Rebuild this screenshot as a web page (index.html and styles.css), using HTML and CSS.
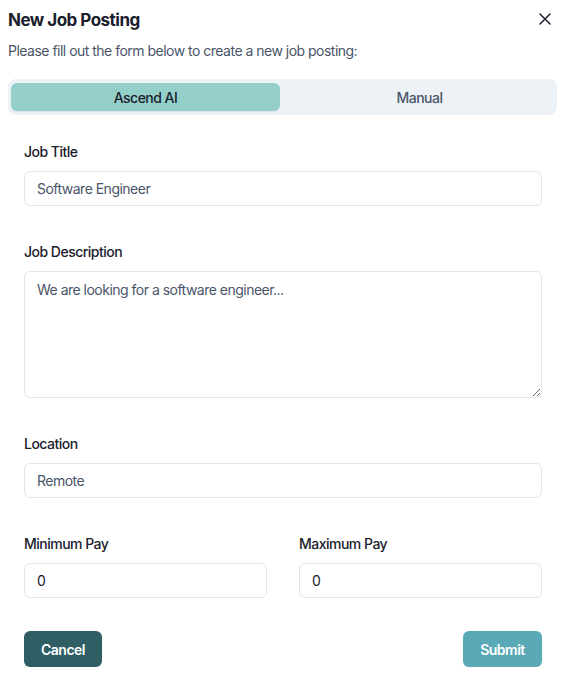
FILE: index.html
```html
<!DOCTYPE html>
<html>
<head>
<meta charset="utf-8">
<link rel="stylesheet" href="styles.css">
</head>
<body>
<div class="modal">
  <div class="header">
    <h1 class="title">New Job Posting</h1>
    <button class="close" aria-label="Close">
      <svg width="12" height="12" viewBox="0 0 12 12"><path d="M1 1L11 11M11 1L1 11" stroke="#1a202c" stroke-width="1.5" stroke-linecap="round"/></svg>
    </button>
  </div>
  <p class="subtitle">Please fill out the form below to create a new job posting:</p>
  <div class="tabs">
    <div class="tab active">Ascend AI</div>
    <div class="tab">Manual</div>
  </div>
  <form class="form">
    <div class="field">
      <label class="label">Job Title</label>
      <input class="input muted" value="Software Engineer">
    </div>
    <div class="field">
      <label class="label">Job Description</label>
      <textarea class="textarea muted">We are looking for a software engineer...</textarea>
    </div>
    <div class="field">
      <label class="label">Location</label>
      <input class="input muted" value="Remote">
    </div>
    <div class="field row">
      <div class="col">
        <label class="label">Minimum Pay</label>
        <input class="input" value="0">
      </div>
      <div class="col">
        <label class="label">Maximum Pay</label>
        <input class="input" value="0">
      </div>
    </div>
    <div class="actions">
      <button type="button" class="btn cancel">Cancel</button>
      <button type="button" class="btn submit">Submit</button>
    </div>
  </form>
</div>
</body>
</html>
```
FILE: styles.css
```css
* { box-sizing: border-box; }
body {
  margin: 0;
  background: #fff;
  font-family: Inter, "Noto Sans", sans-serif;
  color: #1a202c;
  letter-spacing: -0.032em;
}
.modal {
  padding: 6px 10px 0 8px;
}
.header {
  display: flex;
  justify-content: space-between;
  align-items: center;
  height: 28px;
}
.title {
  margin: 0;
  font-size: 17px;
  font-weight: 700;
  line-height: 28px;
}
.close {
  border: 0;
  background: none;
  padding: 0;
  width: 20px;
  height: 20px;
  display: flex;
  align-items: center;
  justify-content: center;
  margin-right: 2px;
  margin-top: -2px;
}
.subtitle {
  margin: 7px 0 0;
  font-size: 14px;
  line-height: 20px;
  color: #4a5568;
}
.tabs {
  margin-top: 18px;
  background: #edf2f7;
  border-radius: 8px;
  height: 36px;
  padding: 4px 3px 4px;
  display: flex;
}
.tab {
  flex: 1;
  display: flex;
  align-items: center;
  justify-content: center;
  font-size: 14px;
  font-weight: 500;
  color: #4a5568;
  border-radius: 6px;
}
.tab.active {
  margin-right: 5px;
  background: #94d0c9;
  color: #1a202c;
  box-shadow: 0 1px 2px rgba(0,0,0,0.06);
}
.form {
  padding: 27px 15px 0 16px;
}
.field + .field { margin-top: 36px; }
.label {
  display: block;
  font-size: 14px;
  font-weight: 500;
  line-height: 20px;
  margin-bottom: 9px;
}
.input, .textarea {
  display: block;
  width: 100%;
  border: 1px solid #e2e2f0;
  border-radius: 6px;
  font-family: inherit;
  letter-spacing: inherit;
  font-size: 14px;
  color: #1a202c;
  padding: 0 12px;
  background: #fff;
}
.input { height: 35px; }
.textarea {
  height: 127px;
  padding: 8px 12px;
  line-height: 20px;
}
.muted { color: #4a5568; }
.row {
  display: flex;
  gap: 32px;
}
.col { flex: 1; }
.actions {
  margin-top: 33px;
  display: flex;
  justify-content: space-between;
}
.btn {
  height: 36px;
  border: 0;
  border-radius: 6px;
  font-family: inherit;
  letter-spacing: inherit;
  font-size: 14px;
  font-weight: 600;
  color: #fff;
  padding: 0 16px;
}
.cancel { background: #2f5f65; width: 78px; }
.submit { background: #5aa9b6; width: 79px; box-shadow: 0 1px 2px rgba(0,0,0,0.08); }
```
